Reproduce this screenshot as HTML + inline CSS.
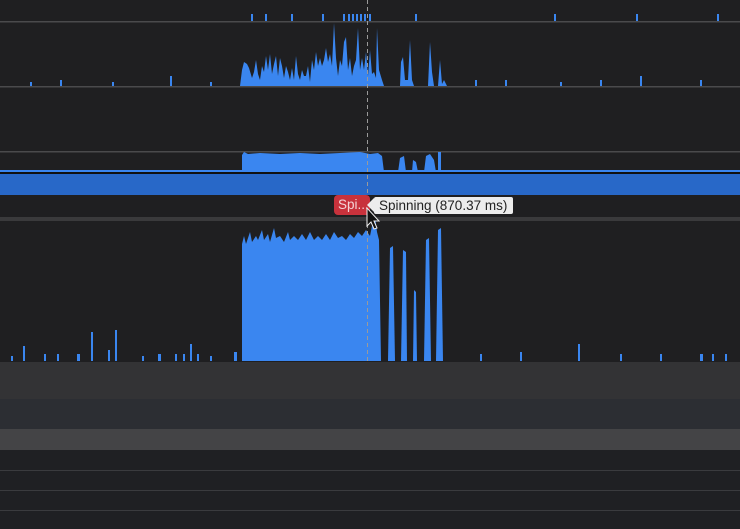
<!DOCTYPE html>
<html><head><style>
html,body{margin:0;padding:0;background:#1f1f21;width:740px;height:529px;overflow:hidden;font-family:"Liberation Sans",sans-serif}
svg{position:absolute;left:0;top:0}
.tip{position:absolute;left:374px;top:197px;height:17px;background:#ececec;color:#222;font-size:13.5px;line-height:17px;padding:0 6px 0 5px;border-radius:2px}
.tip:before{content:"";position:absolute;left:-7px;top:1px;border-top:7px solid transparent;border-bottom:7px solid transparent;border-right:7px solid #ececec}
.red{position:absolute;left:334px;top:195px;width:36px;height:20px;background:#c8323c;color:#f4d4d6;font-size:13.5px;line-height:20px;padding-left:4px;border-radius:4px;box-sizing:border-box;overflow:hidden;white-space:nowrap}
</style></head><body>
<svg width="740" height="529" viewBox="0 0 740 529">
<rect x="0" y="21" width="740" height="1.5" fill="#4a4a4c"/>
<rect x="0" y="86" width="740" height="1.5" fill="#4a4a4c"/>
<rect x="0" y="151" width="740" height="1.5" fill="#4a4a4c"/>
<rect x="0" y="172" width="740" height="2" fill="#111"/>
<rect x="0" y="174" width="740" height="21" fill="#2868c8"/>
<rect x="0" y="217" width="740" height="4" fill="#3a3a3c"/>
<rect x="0" y="362" width="740" height="37" fill="#333335"/>
<rect x="0" y="399" width="740" height="30" fill="#2c2e33"/>
<rect x="0" y="429" width="740" height="21" fill="#444446"/>
<rect x="0" y="450" width="740" height="79" fill="#1f2023"/>
<rect x="0" y="470" width="740" height="1" fill="#3a3b3e"/>
<rect x="0" y="490" width="740" height="1" fill="#3a3b3e"/>
<rect x="0" y="510" width="740" height="1" fill="#3a3b3e"/>
<g fill="#3a86f0">
<rect x="251" y="14" width="2" height="7"/><rect x="265" y="14" width="2" height="7"/><rect x="291" y="14" width="2" height="7"/><rect x="322" y="14" width="2" height="7"/>
<rect x="343" y="14" width="2" height="7"/><rect x="348" y="14" width="2" height="7"/><rect x="352" y="14" width="2" height="7"/><rect x="356" y="14" width="2" height="7"/><rect x="360" y="14" width="2" height="7"/><rect x="364" y="14" width="2" height="7"/><rect x="369" y="14" width="2" height="7"/><rect x="415" y="14" width="2" height="7"/><rect x="554" y="14" width="2" height="7"/><rect x="636" y="14" width="2" height="7"/><rect x="717" y="14" width="2" height="7"/>
<path d="M238 86 L240 86 242 70 244 62 247 64 249 68 252 78 254 72 256 60 258 74 260 80 262 66 264 72 266 56 268 70 270 54 272 74 274 64 276 56 278 76 280 58 282 66 284 78 286 66 288 72 290 80 292 68 294 80 296 56 298 74 300 80 302 70 304 76 306 76 308 66 310 82 312 60 314 70 316 52 318 66 320 58 322 66 324 60 326 48 328 62 330 54 332 66 334 23 336 58 338 76 340 60 342 66 344 42 346 37 348 70 350 58 352 76 354 66 356 60 358 28 360 70 362 58 364 70 366 52 368 76 370 50 372 74 374 72 376 78 377 28 379 70 382 80 384 86 400 86 401 62 403 57 405 80 408 80 410 40 412 80 414 86 428 86 430 42 432 72 434 86 438 86 440 60 442 84 444 80 447 86Z"/>
<rect x="60" y="80" width="2" height="6"/><rect x="112" y="82" width="2" height="4"/><rect x="170" y="76" width="2" height="10"/><rect x="210" y="82" width="2" height="4"/><rect x="475" y="80" width="2" height="6"/><rect x="505" y="80" width="2" height="6"/><rect x="560" y="82" width="2" height="4"/><rect x="600" y="80" width="2" height="6"/><rect x="640" y="76" width="2" height="10"/><rect x="700" y="80" width="2" height="6"/><rect x="30" y="82" width="2" height="4"/>
<rect x="0" y="170" width="740" height="2"/>
<path d="M242 172 L242 155 244 152 248 154 260 153 280 154 300 153 320 154 340 153 360 152 370 154 378 153 382 156 384 172Z"/>
<path d="M398 172 L400 158 404 156 406 172 412 172 413 160 416 162 418 172 424 172 426 156 430 154 434 160 436 172Z"/>
<rect x="438" y="152" width="3" height="20"/>
<path d="M242 361 L242 244 244 236 246 244 250 232 252 242 256 236 258 240 262 230 264 240 268 234 270 242 274 228 276 238 280 236 284 242 288 232 290 240 294 236 298 240 302 234 306 240 310 232 314 240 318 236 322 240 326 234 330 240 334 232 338 238 342 236 346 240 350 234 354 238 358 232 362 236 366 230 370 236 372 226 375 216 377 232 379 240 381 361Z"/>
<path d="M388 361 L390 248 393 246 395 361Z"/>
<path d="M401 361 L403 250 406 252 407 361Z"/>
<path d="M413 361 L414 290 416 292 417 361Z"/>
<path d="M424 361 L426 240 429 238 431 361Z"/>
<path d="M436 361 L438 230 441 228 443 361Z"/>
<rect x="11" y="356" width="2" height="5"/><rect x="23" y="346" width="2" height="15"/><rect x="44" y="354" width="2" height="7"/><rect x="57" y="354" width="2" height="7"/><rect x="77" y="354" width="3" height="7"/><rect x="91" y="332" width="2" height="29"/><rect x="108" y="350" width="2" height="11"/><rect x="115" y="330" width="2" height="31"/><rect x="142" y="356" width="2" height="5"/><rect x="158" y="354" width="3" height="7"/><rect x="175" y="354" width="2" height="7"/><rect x="183" y="354" width="2" height="7"/><rect x="190" y="344" width="2" height="17"/><rect x="197" y="354" width="2" height="7"/><rect x="210" y="356" width="2" height="5"/><rect x="234" y="352" width="3" height="9"/>
<rect x="480" y="354" width="2" height="7"/><rect x="520" y="352" width="2" height="9"/><rect x="578" y="344" width="2" height="17"/><rect x="620" y="354" width="2" height="7"/><rect x="660" y="354" width="2" height="7"/><rect x="700" y="354" width="3" height="7"/><rect x="712" y="354" width="2" height="7"/><rect x="725" y="354" width="2" height="7"/>
</g>
<line x1="367.5" y1="0" x2="367.5" y2="361" stroke="#9a9a9a" stroke-width="1" stroke-dasharray="4,3"/>
</svg>
<div class="red">Spi...</div>
<div class="tip">Spinning (870.37 ms)</div>
<svg width="740" height="529" style="pointer-events:none">
<path d="M367 208 L367 226 371 222 374 229 377 228 374 221 379 221Z" fill="#111" stroke="#eee" stroke-width="1"/>
</svg>
</body></html>
